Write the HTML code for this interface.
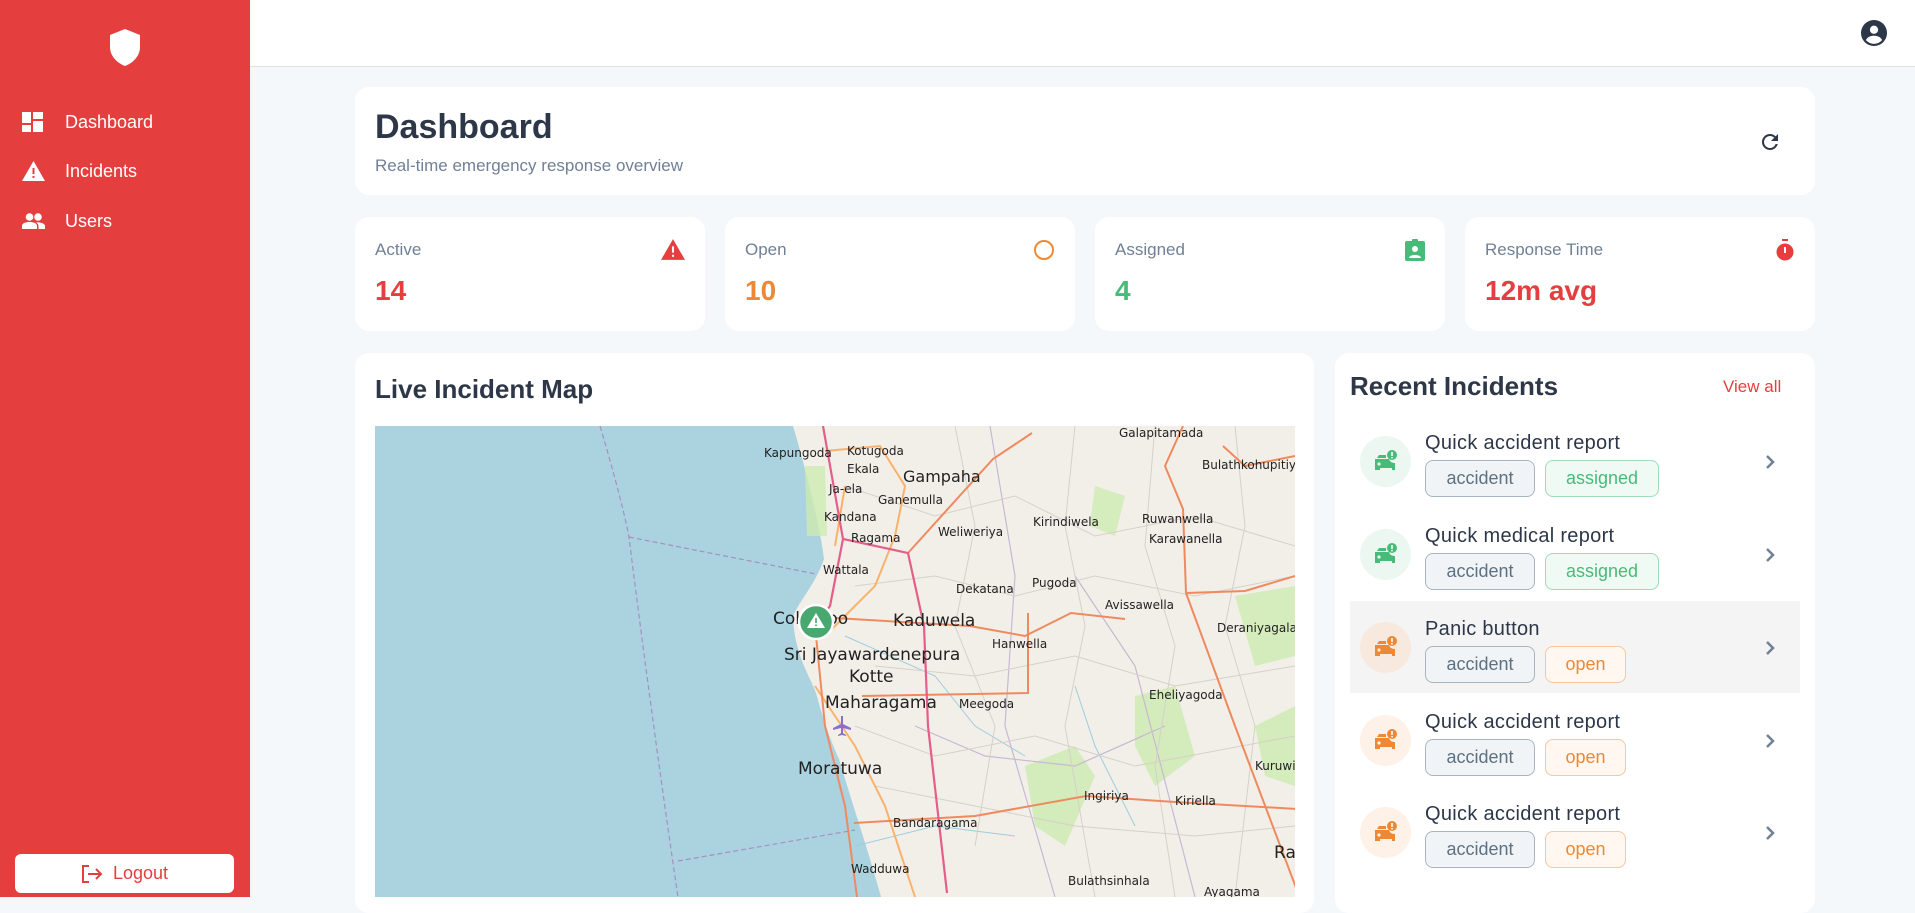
<!DOCTYPE html>
<html><head><meta charset="utf-8"><style>
*{box-sizing:border-box;margin:0;padding:0}
body{width:1915px;height:897px;overflow:hidden;background:#f5f8fb;font-family:"Liberation Sans",sans-serif;position:relative}
.side{position:absolute;left:0;top:0;width:250px;height:897px;background:#e53e3e}
.nav{position:absolute;left:0;display:flex;align-items:center;color:#fff;font-size:18px}
.nav svg{position:absolute;left:22px}
.nav span{position:absolute;left:65px;white-space:nowrap}
.logout{position:absolute;left:15px;top:854px;width:219px;height:39px;background:#fff;border-radius:6px;color:#e53e3e;font-size:18px;display:flex;align-items:center;justify-content:center;gap:10px}
.top{position:absolute;left:250px;top:0;right:0;height:67px;background:#fff;border-bottom:1px solid #dde2e8}
.card{position:absolute;background:#fff;border-radius:14px}
.lbl{position:absolute;left:20px;top:23px;font-size:17px;color:#718096}
.val{position:absolute;left:20px;top:58px;font-size:28px;font-weight:bold}
.ico{position:absolute;right:20px;top:22px}
.item{position:absolute;left:15px;width:450px;height:92px}
.circ{position:absolute;left:10px;top:21px;width:51px;height:51px;border-radius:50%;display:flex;align-items:center;justify-content:center}
.it{position:absolute;left:75px;top:17px;font-size:20px;color:#2d3748;letter-spacing:.3px}
.tag{position:absolute;top:45px;height:37px;border-radius:8px;font-size:18px;display:flex;align-items:center;justify-content:center}
.t1{left:75px;width:110px;background:#f1f4f7;border:1.5px solid #a7b5c2;color:#5c7181}
.chev{position:absolute;left:414px;top:38px}
</style></head><body>
<div class="side">
<svg style="position:absolute;left:110px;top:29px" width="30" height="37" viewBox="0 0 30 37"><path d="M15 0 L30 6 V18 C30 27 23 34 15 37 C7 34 0 27 0 18 V6 Z" fill="#fff"/></svg>
<div class="nav" style="top:112px;height:20px"><svg width="21" height="20" viewBox="0 0 21 20"><rect x="0" y="0" width="9" height="11" fill="#fff"/><rect x="11" y="0" width="10" height="7" fill="#fff"/><rect x="0" y="13" width="9" height="7" fill="#fff"/><rect x="11" y="9" width="10" height="11" fill="#fff"/></svg><span>Dashboard</span></div>
<div class="nav" style="top:161px;height:20px"><svg width="23" height="20" viewBox="0 0 23 20"><path d="M11.5 0 L23 20 H0 Z" fill="#fff"/><rect x="10.5" y="7" width="2" height="6" fill="#e53e3e"/><rect x="10.5" y="15" width="2" height="2" fill="#e53e3e"/></svg><span>Incidents</span></div>
<div class="nav" style="top:211px;height:20px"><svg width="23" height="16" viewBox="0 0 23 16" style="top:2px"><circle cx="7.5" cy="4" r="3.8" fill="#fff"/><circle cx="16" cy="4" r="3.8" fill="#fff"/><path d="M0 16 V13 C0 10 4 9 7.5 9 C11 9 15 10 15 13 V16Z M14 9.5 C17 9 23 10 23 13 V16 H16.5 V13 C16.5 11.5 15.5 10.3 14 9.5Z" fill="#fff"/></svg><span>Users</span></div>
<div class="logout"><svg width="22" height="20" viewBox="0 0 22 20" fill="none" stroke="#e53e3e" stroke-width="2"><path d="M8 2H2V18H8M7 10H20M15 5L20 10L15 15"/></svg>Logout</div>
</div>
<div class="top"><svg style="position:absolute;right:28px;top:20px" width="26" height="26" viewBox="0 0 24 24"><circle cx="12" cy="12" r="12" fill="#2d3748"/><circle cx="12" cy="9" r="3.8" fill="#fff"/><path d="M4.5 18.5C6 15.5 9 14.5 12 14.5S18 15.5 19.5 18.5C17.5 20.8 15 22 12 22S6.5 20.8 4.5 18.5Z" fill="#fff"/></svg></div>

<div class="card" style="left:355px;top:87px;width:1460px;height:108px">
<div style="position:absolute;left:20px;top:21px;font-size:34px;color:#2d3748;font-weight:bold">Dashboard</div>
<div style="position:absolute;left:20px;top:69px;font-size:17px;color:#718096">Real-time emergency response overview</div>
<svg style="position:absolute;left:1403px;top:43px" width="24" height="24" viewBox="0 0 24 24"><path d="M17.65 6.35A7.95 7.95 0 0 0 12 4a8 8 0 1 0 7.73 10h-2.08A6 6 0 1 1 12 6c1.66 0 3.14.69 4.22 1.78L13 11h7V4z" fill="#2d3748"/></svg>
</div>

<div class="card" style="left:355px;top:217px;width:350px;height:114px"><div class="lbl">Active</div><div class="val" style="color:#e53e3e">14</div>
<svg class="ico" width="24" height="21" viewBox="0 0 23 20"><path d="M11.5 0 L23 20 H0 Z" fill="#e53e3e"/><rect x="10.5" y="7" width="2" height="6" fill="#fff"/><rect x="10.5" y="15" width="2" height="2" fill="#fff"/></svg></div>
<div class="card" style="left:725px;top:217px;width:350px;height:114px"><div class="lbl">Open</div><div class="val" style="color:#ed8936">10</div>
<svg class="ico" width="22" height="22" viewBox="0 0 22 22"><circle cx="11" cy="11" r="9" fill="none" stroke="#ed8936" stroke-width="2"/></svg></div>
<div class="card" style="left:1095px;top:217px;width:350px;height:114px"><div class="lbl">Assigned</div><div class="val" style="color:#48bb78">4</div>
<svg class="ico" width="20" height="22" viewBox="0 0 20 22"><rect x="0" y="2" width="20" height="20" rx="2" fill="#48bb78"/><rect x="7" y="0" width="6" height="4" rx="1" fill="#48bb78"/><circle cx="10" cy="10" r="3" fill="#fff"/><path d="M4 19C4 15 16 15 16 19Z" fill="#fff"/></svg></div>
<div class="card" style="left:1465px;top:217px;width:350px;height:114px"><div class="lbl">Response Time</div><div class="val" style="color:#e53e3e">12m avg</div>
<svg class="ico" width="20" height="22" viewBox="0 0 20 22"><rect x="7" y="0" width="6" height="2" fill="#e53e3e"/><circle cx="10" cy="13" r="8.5" fill="#e53e3e"/><rect x="9" y="8" width="2" height="6" fill="#fff"/></svg></div>

<div class="card" style="left:355px;top:353px;width:959px;height:560px;overflow:hidden">
<div style="position:absolute;left:20px;top:21px;font-size:26px;color:#2d3748;font-weight:bold">Live Incident Map</div>
<svg style="position:absolute;left:20px;top:73px" width="920" height="471" viewBox="0 0 920 471" font-family="DejaVu Sans, sans-serif" font-size="12" fill="#222">
<rect width="920" height="471" fill="#f2efe9"/>
<path d="M0 0 H418 C430 40 445 100 449 133 C440 160 420 180 418 192 C420 230 435 250 441 267 C450 300 458 320 464 333 C478 380 495 430 506 471 H0Z" fill="#aad3df"/>
<g fill="#cdebb0" opacity=".8"><path d="M650 340 L700 320 L720 350 L690 420 L660 400Z"/><path d="M760 270 L800 260 L820 330 L780 360 L760 320Z"/><path d="M860 170 L920 160 L920 230 L880 240Z"/><path d="M720 60 L750 70 L740 110 L715 100Z"/><path d="M880 300 L920 280 L920 360 L890 350Z"/><path d="M430 40 L450 40 L452 110 L432 110Z"/></g>
<g fill="none" stroke="#c7b8d4" stroke-width="1.2"><path d="M615 0 L640 150 L630 300 L680 471"/><path d="M700 150 L760 240 L820 471"/><path d="M540 300 L610 330 L700 340 L790 300"/></g>
<g fill="none" stroke="#9ccde0" stroke-width="1"><path d="M470 210 L560 250 L600 300 L650 330"/><path d="M700 260 L720 320 L760 400"/><path d="M480 420 L560 400 L640 410"/></g>
<g fill="none" stroke="#d6d0c8" stroke-width="1"><path d="M470 60 L560 90 L640 70 L720 110 L820 90 L920 120"/><path d="M480 160 L560 150 L640 170 L720 150 L820 170 L920 150"/><path d="M500 240 L600 250 L700 230 L800 260 L920 240"/><path d="M480 300 L560 330 L660 310 L760 340 L920 310"/><path d="M500 360 L600 380 L700 400 L820 410 L920 400"/><path d="M580 0 L600 100 L580 200 L620 300 L600 420"/><path d="M700 0 L690 100 L710 200 L690 300 L720 471"/><path d="M780 0 L770 120 L800 220 L780 340 L800 471"/><path d="M860 0 L870 100 L850 200 L880 300 L860 471"/></g>
<g fill="none" stroke="#f9b26b" stroke-width="2"><path d="M450 25 L505 20 L530 60 L520 110 L500 160 L450 210"/><path d="M440 260 L480 320 L510 380 L540 471"/><path d="M470 60 L460 120"/></g>
<g fill="none" stroke="#ef8a5f" stroke-width="2"><path d="M460 192 L595 200 L650 210 L696 187 L750 193"/><path d="M533 127 L618 33 L657 7"/><path d="M487 270 L653 267 L653 187"/><path d="M479 397 L600 390 L711 370 L800 376 L923 383"/><path d="M808 0 L790 40 L808 83 L811 167 L860 300 L923 467"/><path d="M848 20 L870 40 L920 30"/><path d="M811 167 L870 165 L920 150"/><path d="M440 200 L450 300 L470 380 L482 471"/></g>
<g fill="none" stroke="#e55e8a" stroke-width="2.2"><path d="M448 0 L468 113 L533 127 L549 200 L553 300 L572 467"/><path d="M468 113 L455 180 L440 200"/></g>
<g fill="none" stroke="#a691b8" stroke-width="1.2" stroke-dasharray="5 3"><path d="M225 0 C240 50 250 90 254 111 C265 200 285 350 303 471"/><path d="M254 111 L441 148"/><path d="M303 435 L480 404"/></g>
<g>
<text x="389" y="31">Kapungoda</text><text x="472" y="29">Kotugoda</text><text x="472" y="47">Ekala</text><text x="528" y="56" font-size="16">Gampaha</text><text x="454" y="67">Ja-ela</text><text x="503" y="78">Ganemulla</text><text x="449" y="95">Kandana</text><text x="476" y="116">Ragama</text><text x="563" y="110">Weliweriya</text><text x="658" y="100">Kirindiwela</text><text x="744" y="11">Galapitamada</text><text x="827" y="43">Bulathkohupitiya</text><text x="767" y="97">Ruwanwella</text><text x="774" y="117">Karawanella</text><text x="448" y="148">Wattala</text><text x="581" y="167">Dekatana</text><text x="657" y="161">Pugoda</text><text x="730" y="183">Avissawella</text><text x="842" y="206">Deraniyagala</text><text x="398" y="198" font-size="17">Colombo</text><text x="518" y="200" font-size="17">Kaduwela</text><text x="617" y="222">Hanwella</text><text x="409" y="234" font-size="17">Sri Jayawardenepura</text><text x="474" y="256" font-size="17">Kotte</text><text x="450" y="282" font-size="17">Maharagama</text><text x="584" y="282">Meegoda</text><text x="774" y="273">Eheliyagoda</text><text x="423" y="348" font-size="17">Moratuwa</text><text x="880" y="344">Kuruwit</text><text x="709" y="374">Ingiriya</text><text x="800" y="379">Kiriella</text><text x="518" y="401">Bandaragama</text><text x="476" y="447">Wadduwa</text><text x="693" y="459">Bulathsinhala</text><text x="829" y="470">Ayagama</text><text x="899" y="432" font-size="17">Rat</text>
</g>
<circle cx="441" cy="196" r="17" fill="#48a870" stroke="#fff" stroke-width="2.5"/>
<path d="M441 187 L450 202 H432Z" fill="#fff"/><rect x="440.2" y="192" width="1.6" height="5" fill="#48a870"/><rect x="440.2" y="198.5" width="1.6" height="1.6" fill="#48a870"/>
<path d="M466 290 l0 8 l-8 4 l0 2 l8 -2 l0 5 l-3 2 l0 1 l4 -1 l4 1 l0 -1 l-3 -2 l0 -5 l8 2 l0 -2 l-8 -4 l0 -8z" fill="#8a6fcf"/>
</svg>
</div>

<div class="card" style="left:1335px;top:353px;width:480px;height:560px">
<div style="position:absolute;left:15px;top:18px;font-size:26px;color:#2d3748;font-weight:bold">Recent Incidents</div>
<div style="position:absolute;left:388px;top:24px;font-size:17px;color:#e53e3e">View all</div>

<div class="item" style="top:62px">
<div class="circ" style="background:#ebf7f0"><svg width="26" height="24" viewBox="0 0 26 24"><path d="M4 8 L6 5 H13 V8 Z" fill="#48bb78"/><path d="M2 9 H16 C17 12 19 13 22 13 V20 H19 V18 H7 V20 H2Z" fill="#48bb78"/><circle cx="6" cy="14" r="1.6" fill="#ebf7f0"/><circle cx="19" cy="5" r="5" fill="#48bb78"/><rect x="18.2" y="2" width="1.6" height="4" fill="#fff"/><rect x="18.2" y="7" width="1.6" height="1.4" fill="#fff"/></svg></div>
<div class="it">Quick accident report</div>
<div class="tag t1">accident</div><div class="tag" style="left:195px;width:114px;background:#f0faf4;border:1.5px solid #9fdcb7;color:#48bb78">assigned</div>
<svg class="chev" width="12" height="18" viewBox="0 0 12 18"><path d="M3 3 L9 9 L3 15" fill="none" stroke="#718096" stroke-width="2.5"/></svg></div>

<div class="item" style="top:155px">
<div class="circ" style="background:#ebf7f0"><svg width="26" height="24" viewBox="0 0 26 24"><path d="M4 8 L6 5 H13 V8 Z" fill="#48bb78"/><path d="M2 9 H16 C17 12 19 13 22 13 V20 H19 V18 H7 V20 H2Z" fill="#48bb78"/><circle cx="6" cy="14" r="1.6" fill="#ebf7f0"/><circle cx="19" cy="5" r="5" fill="#48bb78"/><rect x="18.2" y="2" width="1.6" height="4" fill="#fff"/><rect x="18.2" y="7" width="1.6" height="1.4" fill="#fff"/></svg></div>
<div class="it">Quick medical report</div>
<div class="tag t1">accident</div><div class="tag" style="left:195px;width:114px;background:#f0faf4;border:1.5px solid #9fdcb7;color:#48bb78">assigned</div>
<svg class="chev" width="12" height="18" viewBox="0 0 12 18"><path d="M3 3 L9 9 L3 15" fill="none" stroke="#718096" stroke-width="2.5"/></svg></div>

<div class="item" style="top:248px;background:#f4f4f4">
<div class="circ" style="background:#f8e9df"><svg width="26" height="24" viewBox="0 0 26 24"><path d="M4 8 L6 5 H13 V8 Z" fill="#ed8936"/><path d="M2 9 H16 C17 12 19 13 22 13 V20 H19 V18 H7 V20 H2Z" fill="#ed8936"/><circle cx="6" cy="14" r="1.6" fill="#f8e9df"/><circle cx="19" cy="5" r="5" fill="#ed8936"/><rect x="18.2" y="2" width="1.6" height="4" fill="#fff"/><rect x="18.2" y="7" width="1.6" height="1.4" fill="#fff"/></svg></div>
<div class="it">Panic button</div>
<div class="tag t1">accident</div><div class="tag" style="left:195px;width:81px;background:#fff7f0;border:1.5px solid #f8c79c;color:#ed8936">open</div>
<svg class="chev" width="12" height="18" viewBox="0 0 12 18"><path d="M3 3 L9 9 L3 15" fill="none" stroke="#718096" stroke-width="2.5"/></svg></div>

<div class="item" style="top:341px">
<div class="circ" style="background:#fdf1e8"><svg width="26" height="24" viewBox="0 0 26 24"><path d="M4 8 L6 5 H13 V8 Z" fill="#ed8936"/><path d="M2 9 H16 C17 12 19 13 22 13 V20 H19 V18 H7 V20 H2Z" fill="#ed8936"/><circle cx="6" cy="14" r="1.6" fill="#fdf1e8"/><circle cx="19" cy="5" r="5" fill="#ed8936"/><rect x="18.2" y="2" width="1.6" height="4" fill="#fff"/><rect x="18.2" y="7" width="1.6" height="1.4" fill="#fff"/></svg></div>
<div class="it">Quick accident report</div>
<div class="tag t1">accident</div><div class="tag" style="left:195px;width:81px;background:#fff7f0;border:1.5px solid #f8c79c;color:#ed8936">open</div>
<svg class="chev" width="12" height="18" viewBox="0 0 12 18"><path d="M3 3 L9 9 L3 15" fill="none" stroke="#718096" stroke-width="2.5"/></svg></div>

<div class="item" style="top:433px">
<div class="circ" style="background:#fdf1e8"><svg width="26" height="24" viewBox="0 0 26 24"><path d="M4 8 L6 5 H13 V8 Z" fill="#ed8936"/><path d="M2 9 H16 C17 12 19 13 22 13 V20 H19 V18 H7 V20 H2Z" fill="#ed8936"/><circle cx="6" cy="14" r="1.6" fill="#fdf1e8"/><circle cx="19" cy="5" r="5" fill="#ed8936"/><rect x="18.2" y="2" width="1.6" height="4" fill="#fff"/><rect x="18.2" y="7" width="1.6" height="1.4" fill="#fff"/></svg></div>
<div class="it">Quick accident report</div>
<div class="tag t1">accident</div><div class="tag" style="left:195px;width:81px;background:#fff7f0;border:1.5px solid #f8c79c;color:#ed8936">open</div>
<svg class="chev" width="12" height="18" viewBox="0 0 12 18"><path d="M3 3 L9 9 L3 15" fill="none" stroke="#718096" stroke-width="2.5"/></svg></div>
</div>
</body></html>
